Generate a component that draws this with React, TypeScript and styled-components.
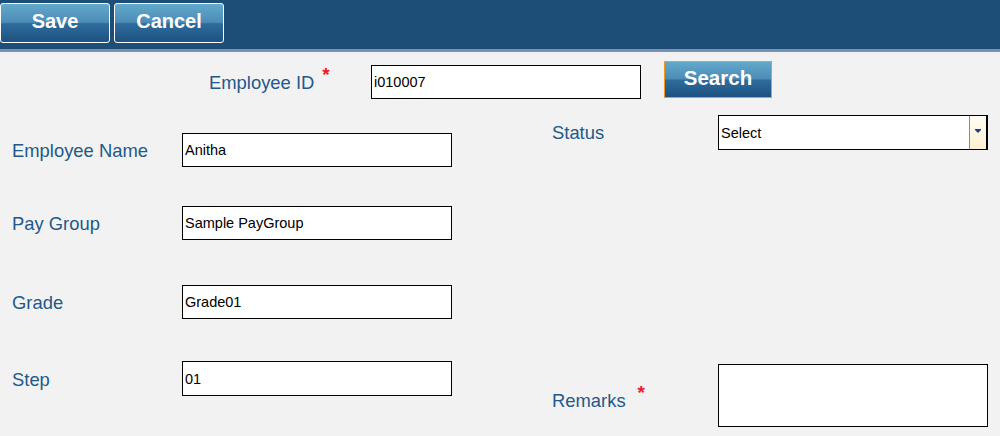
import React from "react";
import styled, { createGlobalStyle } from "styled-components";

const Global = createGlobalStyle`
  html, body { margin: 0; padding: 0; }
  body {
    background: #f2f2f2;
    font-family: "Liberation Sans", Arial, Helvetica, sans-serif;
    width: 1000px;
    height: 436px;
    overflow: hidden;
  }
`;

const Header = styled.div`
  display: flex;
  align-items: flex-start;
  gap: 4px;
  height: 46px;
  padding-top: 3px;
  background: #1c4e77;
  border-bottom: 3px solid #7b8fb4;
`;

const glossy = `
  background: linear-gradient(
    to bottom,
    #63a9cb 0%,
    #4c8cb7 48%,
    #2e6c9c 52%,
    #1d5281 100%
  );
  color: #ffffff;
  font-family: "Liberation Sans", Arial, Helvetica, sans-serif;
  font-weight: bold;
  cursor: pointer;
  padding: 0;
  display: flex;
  align-items: center;
  justify-content: center;
`;

const HeaderButton = styled.button`
  ${glossy}
  width: 110px;
  height: 40px;
  font-size: 20px;
  border: 1px solid #ffffff;
  border-radius: 3px;
  padding-bottom: 4px;
`;

const SearchButton = styled.button`
  ${glossy}
  width: 108px;
  height: 37px;
  font-size: 20.5px;
  border: 1px solid #f39a1e;
  border-radius: 0;
  padding-bottom: 3px;
  margin-left: 23px;
`;

const TopRow = styled.div`
  display: flex;
  align-items: flex-start;
  padding: 9px 0 0 209px;
`;

const Field = styled.div<{ $mt?: number }>`
  display: flex;
  align-items: center;
  margin-top: ${(p) => p.$mt ?? 0}px;
`;

const Label = styled.label<{ $w: number; $shift?: number }>`
  display: flex;
  align-items: flex-start;
  width: ${(p) => p.$w}px;
  flex: none;
  color: #22598a;
  font-size: 18.4px;
  line-height: 21px;
  margin-top: ${(p) => (p.$shift ?? 0) * 2}px;
`;

const Star = styled.span<{ $gap: number }>`
  color: #f0182c;
  font-size: 19px;
  font-weight: bold;
  line-height: 1;
  margin-left: ${(p) => p.$gap}px;
  margin-top: -7px;
`;

const TextInput = styled.input<{ $h?: number }>`
  box-sizing: border-box;
  width: 270px;
  height: ${(p) => p.$h ?? 34}px;
  border: 1px solid #000;
  background: #fff;
  padding: 0 0 0 2px;
  margin: 0;
  font-family: "Liberation Sans", Arial, Helvetica, sans-serif;
  font-size: 14.5px;
  color: #000;
  outline: none;
`;

const Main = styled.div`
  display: flex;
  padding-left: 12px;
`;

const Column = styled.div<{ $w: number }>`
  display: flex;
  flex-direction: column;
  width: ${(p) => p.$w}px;
  flex: none;
`;

const SelectBox = styled.div`
  box-sizing: border-box;
  display: flex;
  width: 270px;
  height: 35px;
  border: 1px solid #000;
  border-right-width: 2px;
  background: #fff;
`;

const SelectValue = styled.div`
  flex: 1;
  display: flex;
  align-items: center;
  padding-left: 2px;
  font-size: 14.5px;
  color: #000;
`;

const ArrowBox = styled.div`
  width: 16px;
  flex: none;
  border-left: 1px solid #8c8c8c;
  background: linear-gradient(to bottom, #fffdf3, #fcf0d2);
  display: flex;
  align-items: center;
  justify-content: center;
  padding-bottom: 2px;
`;

const TextArea = styled.textarea`
  box-sizing: border-box;
  width: 270px;
  height: 63px;
  border: 1px solid #000;
  background: #fff;
  margin: 0;
  padding: 2px;
  resize: none;
  outline: none;
  font-family: "Liberation Sans", Arial, Helvetica, sans-serif;
  font-size: 14.5px;
`;

const Caret = () => (
  <svg width="6" height="5" viewBox="0 0 6 5">
    <rect x="0" y="0" width="6" height="1" fill="#1f3f8a" />
    <polygon points="0,1 6,1 3,4" fill="#1f3f8a" />
  </svg>
);

export default function App() {
  return (
    <>
      <Global />
      <Header>
        <HeaderButton>Save</HeaderButton>
        <HeaderButton>Cancel</HeaderButton>
      </Header>
      <TopRow>
        <Field $mt={4}>
          <Label $w={162}>
            Employee ID<Star $gap={8}>*</Star>
          </Label>
          <TextInput defaultValue="i010007" />
        </Field>
        <SearchButton>Search</SearchButton>
      </TopRow>
      <Main>
        <Column $w={540}>
          <Field $mt={34}>
            <Label $w={170}>Employee Name</Label>
            <TextInput defaultValue="Anitha" />
          </Field>
          <Field $mt={39}>
            <Label $w={170}>Pay Group</Label>
            <TextInput defaultValue="Sample PayGroup" />
          </Field>
          <Field $mt={45}>
            <Label $w={170}>Grade</Label>
            <TextInput defaultValue="Grade01" />
          </Field>
          <Field $mt={42}>
            <Label $w={170} $shift={1}>Step</Label>
            <TextInput $h={35} defaultValue="01" />
          </Field>
        </Column>
        <Column $w={436}>
          <Field $mt={16}>
            <Label $w={166}>Status</Label>
            <SelectBox>
              <SelectValue>Select</SelectValue>
              <ArrowBox>
                <Caret />
              </ArrowBox>
            </SelectBox>
          </Field>
          <Field $mt={214}>
            <Label $w={166} $shift={4.5}>
              Remarks<Star $gap={12}>*</Star>
            </Label>
            <TextArea />
          </Field>
        </Column>
      </Main>
    </>
  );
}
